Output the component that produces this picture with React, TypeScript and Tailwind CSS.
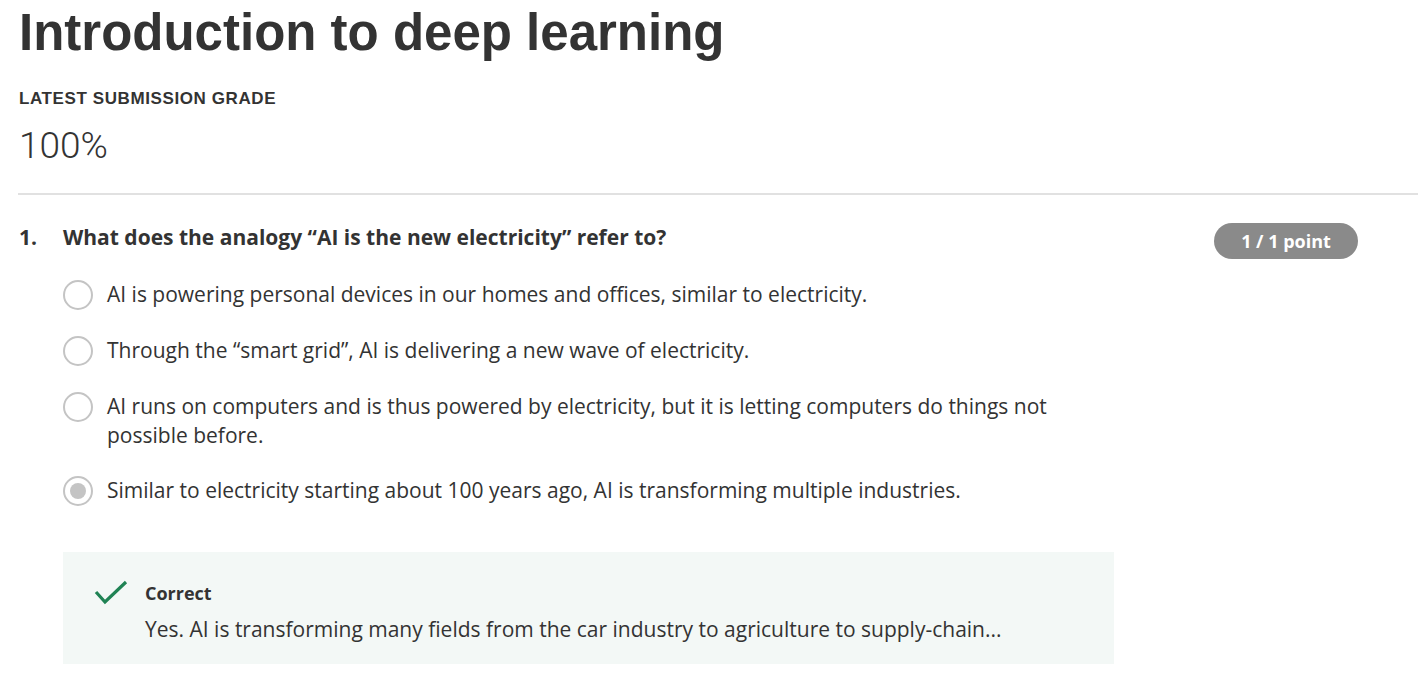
const options = [
  "AI is powering personal devices in our homes and offices, similar to electricity.",
  "Through the “smart grid”, AI is delivering a new wave of electricity.",
  "AI runs on computers and is thus powered by electricity, but it is letting computers do things not possible before.",
  "Similar to electricity starting about 100 years ago, AI is transforming multiple industries.",
];

const Radio = ({ checked }: { checked: boolean }) => (
  <span className="flex h-[30px] w-[30px] shrink-0 items-center justify-center rounded-full border-[2.5px] border-[#c4c4c4] bg-white">
    {checked && <span className="h-[16px] w-[16px] rounded-full bg-[#c4c4c4]" />}
  </span>
);

export default function App() {
  return (
    <div className="min-h-screen bg-white pl-[18px] pr-[10px] text-[#333]">
      <h1 className="pl-[1px] pt-1 font-['Liberation_Sans',Arial,sans-serif] text-[51px] font-bold leading-[57px] text-[#333]">
        Introduction to deep learning
      </h1>
      <div className="mt-[28px] pl-[1px] font-['Liberation_Sans',Arial,sans-serif] text-[17px] font-bold leading-5 tracking-[0.6px] text-[#333]">
        LATEST SUBMISSION GRADE
      </div>
      <div className="mt-[16px] pl-[1px] font-['Roboto',sans-serif] text-[37px] font-light leading-[42px] text-[#333]">
        100%
      </div>
      <hr className="mt-[26px] border-t-2 border-[#e1e1e1]" />

      <div className="font-['Open_Sans',sans-serif]">
        <div className="mt-[26px] flex items-start pr-[60px]">
          <span className="w-[45px] pl-[1px] text-[21px] font-bold leading-[32px]">1.</span>
          <div className="flex-1 text-[21px] font-bold leading-[32px]">
            What does the analogy “AI is the new electricity” refer to?
          </div>
          <span className="mt-[2px] flex h-[36px] w-[144px] items-center justify-center rounded-full bg-[#8a8a8a] text-[18px] font-bold text-white">
            1 / 1 point
          </span>
        </div>

        <div className="ml-[45px] w-[1051px]">
          <div className="mt-[21px] flex flex-col gap-[26px]">
            {options.map((o, i) => (
              <label key={i} className="flex items-start gap-[14px]">
                <Radio checked={i === 3} />
                <span className="pr-[60px] text-[21px] leading-[29px] text-[#333]">{o}</span>
              </label>
            ))}
          </div>

          <div className="mt-[46px] flex gap-[17px] bg-[#f3f8f6] px-[31px] pb-[20px] pt-[26px]">
            <svg width="34" height="26" viewBox="0 0 34 26" className="mt-[2px] shrink-0">
              <path d="M2 12 L11 22 L32 2" fill="none" stroke="#1f8354" strokeWidth="3.2" />
            </svg>
            <div>
              <div className="text-[18px] font-bold leading-[30px] text-[#333]">Correct</div>
              <div className="mt-[6px] text-[21px] leading-[30px] text-[#333]">
                Yes. AI is transforming many fields from the car industry to agriculture to supply-chain...
              </div>
            </div>
          </div>
        </div>
      </div>
    </div>
  );
}
